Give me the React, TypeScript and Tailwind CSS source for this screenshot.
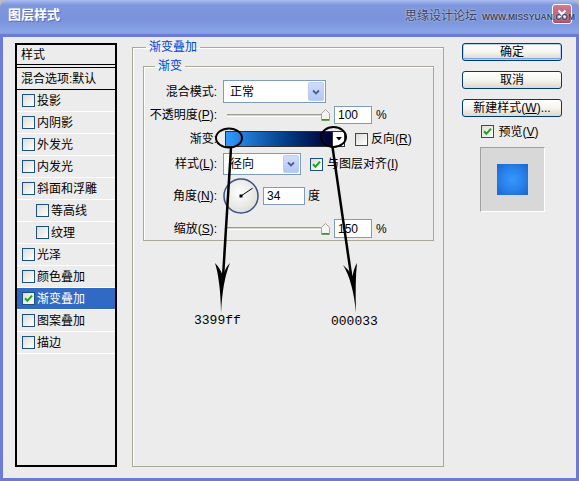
import React from 'react';

const ui = "font-['Liberation_Sans','Noto_Sans_CJK_SC',sans-serif]";

function CheckBox({ checked = false }: { checked?: boolean }) {
  return (
    <span className="w-[13px] h-[13px] border border-[#1c5180] bg-gradient-to-br from-[#dcdcd7] to-white flex items-center justify-center shrink-0">
      {checked && (
        <svg width="9" height="9" viewBox="0 0 9 9">
          <path d="M1 4.2 L3.4 6.8 L8 1.6" stroke="#21a121" strokeWidth="2" fill="none" />
        </svg>
      )}
    </span>
  );
}

function Select({ value, width, height }: { value: string; width: string; height: string }) {
  return (
    <div className={`${width} ${height} border border-[#7f9db9] bg-white flex items-center`}>
      <span className="flex-1 pl-[6px] text-[12px] leading-none">{value}</span>
      <span className="w-[16px] h-[calc(100%-2px)] mr-[1px] rounded-[2px] border border-[#bccdf6] bg-gradient-to-b from-[#cfdcfb] to-[#b3c7f7] flex items-center justify-center">
        <svg width="8" height="6" viewBox="0 0 8 6">
          <path d="M1 1.5 L4 4.5 L7 1.5" stroke="#4d6185" strokeWidth="1.8" fill="none" />
        </svg>
      </span>
    </div>
  );
}

function Slider() {
  return (
    <div className="w-[111px] h-full flex items-center px-[4px]">
      <div className="flex-1 h-[3px] border-t border-[#9d9d92] border-b border-b-white bg-[#d6d3c8]" />
      <svg width="9" height="12" viewBox="0 0 9 12" className="shrink-0">
        <path d="M0.5 11.5 V4.5 L4.5 0.5 L8.5 4.5 V11.5 Z" fill="#f4f4f0" stroke="#a5a59a" />
        <path d="M1 10 H8 V11.5 H1 Z" fill="#21a121" />
      </svg>
    </div>
  );
}

function Field({ value, width, height }: { value: string; width: string; height: string }) {
  return (
    <div className={`${width} ${height} border border-[#7f9db9] bg-white flex items-center pl-[3px] text-[12px] leading-none`}>
      {value}
    </div>
  );
}

function Button({ label, primary = false }: { label: React.ReactNode; primary?: boolean }) {
  return (
    <div
      className={`w-[100px] h-[18px] rounded-[3px] border border-[#003c74] bg-gradient-to-b from-white via-[#f5f4ef] to-[#dcd8cc] flex items-center justify-center text-[12px] leading-none text-black ${
        primary ? 'shadow-[inset_0_0_0_1px_#b9d0f5,inset_0_-1px_0_1px_#7aa2e5]' : ''
      }`}
    >
      {label}
    </div>
  );
}

const items: { label: string; sub?: boolean; checked?: boolean; selected?: boolean }[] = [
  { label: '投影' },
  { label: '内阴影' },
  { label: '外发光' },
  { label: '内发光' },
  { label: '斜面和浮雕' },
  { label: '等高线', sub: true },
  { label: '纹理', sub: true },
  { label: '光泽' },
  { label: '颜色叠加' },
  { label: '渐变叠加', checked: true, selected: true },
  { label: '图案叠加' },
  { label: '描边' },
];

function Row({ label, children, className = '' }: { label: React.ReactNode; children: React.ReactNode; className?: string }) {
  return (
    <div className={`flex items-center ${className}`}>
      <span className="w-[73px] text-right text-[12px] leading-none whitespace-nowrap">{label}</span>
      <div className="ml-[6px] h-full flex items-center">{children}</div>
    </div>
  );
}

export default function App() {
  return (
    <div className={`relative w-[579px] h-[481px] bg-[#bdbdbd] flex flex-col text-black ${ui}`}>
      {/* title bar */}
      <div className="h-[37px] shrink-0 rounded-t-[7px] bg-[linear-gradient(180deg,#aabcf0_0%,#7e96dd_14%,#7a93db_55%,#89a4e7_85%,#7b93dc_100%)] flex items-start pl-[8px] pt-[6px]">
        <span className="text-[13px] font-bold text-white leading-[17px] [text-shadow:1px_1px_0_#5b6db4]">图层样式</span>
        <div className="ml-auto mr-[7px] mt-[-2px] w-[20px] h-[20px] rounded-[3px] border border-white bg-gradient-to-b from-[#d07c93] to-[#a94b67] flex items-center justify-center">
          <svg width="10" height="10" viewBox="0 0 10 10">
            <path d="M1.5 1.5 L8.5 8.5 M8.5 1.5 L1.5 8.5" stroke="white" strokeWidth="2" />
          </svg>
        </div>
      </div>

      {/* watermark */}
      <div className="absolute left-[405px] top-[7px] flex items-center gap-[5px] whitespace-nowrap pointer-events-none">
        <span className="text-[12px] leading-[17px] text-[#3a4462] [text-shadow:0_0_2px_#e8eeff]">思缘设计论坛</span>
        <span className="text-[8.5px] font-bold leading-[17px] text-[#3a4462] mt-[2px] [text-shadow:0_0_2px_#e8eeff]">WWW.MISSYUAN.COM</span>
      </div>

      {/* body */}
      <div className="flex-1 mx-[3px] mb-[3px] bg-[#ececec] flex items-start pl-[12px] outline-[3px] outline-[#6e7bd6] outline">
        {/* styles list */}
        <div className="mt-[6px] w-[102px] h-[424px] border-2 border-black bg-[#ececec] flex flex-col">
          <div className="h-[20px] border-b border-black flex items-center pl-[4px] text-[12px] leading-none">样式</div>
          <div className="mt-[2px] h-[23px] border-y border-black flex items-center pl-[4px] text-[12px] leading-none whitespace-nowrap">混合选项:默认</div>
          {items.map((it) => (
            <div
              key={it.label}
              className={`h-[22px] border-b border-white flex items-center gap-[2px] text-[12px] leading-none ${it.sub ? 'pl-[19px]' : 'pl-[5px]'} ${
                it.selected ? 'bg-[#316ac5] text-white' : ''
              }`}
            >
              <CheckBox checked={it.checked} />
              <span>{it.label}</span>
            </div>
          ))}
        </div>

        {/* gradient overlay settings */}
        <fieldset className="ml-[15px] mt-[3px] w-[312px] h-[427px] border border-[#aca899] shadow-[inset_1px_1px_0_#fff]">
          <legend className="ml-[13px] px-[3px] text-[12px] leading-[14px] text-[#0046d5]">渐变叠加</legend>
          <fieldset className="ml-[10px] mt-[5px] w-[291px] h-[182px] border border-[#aca899] shadow-[inset_1px_1px_0_#fff]">
            <legend className="ml-[11px] px-[3px] text-[12px] leading-[14px] text-[#0046d5]">渐变</legend>
            <Row label="混合模式:" className="mt-[7px] h-[23px]">
              <Select value="正常" width="w-[103px]" height="h-[23px]" />
            </Row>
            <Row
              label={
                <>
                  不透明度(<span className="underline">P</span>):
                </>
              }
              className="mt-[3px] h-[18px]"
            >
              <Slider />
              <Field value="100" width="w-[38px]" height="h-[18px]" />
              <span className="ml-[4px] text-[12px] leading-none">%</span>
            </Row>
            <Row label="渐变:" className="mt-[7px] h-[16px]">
              <div className="ml-[2px] w-[108px] h-[16px] border border-[#303030] bg-gradient-to-r from-[#3399ff] to-[#000033]" />
              <div className="w-[12px] h-[16px] border border-[#303030] border-l-0 bg-white flex items-center justify-center">
                <svg width="6" height="4" viewBox="0 0 6 4">
                  <path d="M0 0 H6 L3 3.5 Z" fill="#000" />
                </svg>
              </div>
              <span className="ml-[10px]">
                <CheckBox />
              </span>
              <span className="ml-[3px] text-[12px] leading-none whitespace-nowrap">
                反向(<span className="underline">R</span>)
              </span>
            </Row>
            <Row
              label={
                <>
                  样式(<span className="underline">L</span>):
                </>
              }
              className="mt-[6px] h-[22px]"
            >
              <Select value="径向" width="w-[78px]" height="h-[22px]" />
              <span className="ml-[9px]">
                <CheckBox checked />
              </span>
              <span className="ml-[4px] text-[12px] leading-none whitespace-nowrap">
                与图层对齐(<span className="underline">I</span>)
              </span>
            </Row>
            <Row
              label={
                <>
                  角度(<span className="underline">N</span>):
                </>
              }
              className="mt-[3px] h-[36px]"
            >
              <svg width="36" height="36" viewBox="0 0 36 36">
                <defs>
                  <radialGradient id="dial" cx="45%" cy="40%" r="65%">
                    <stop offset="0%" stopColor="#ffffff" />
                    <stop offset="100%" stopColor="#dcdcd8" />
                  </radialGradient>
                </defs>
                <circle cx="18" cy="18" r="17" fill="url(#dial)" stroke="#3b5283" strokeWidth="1.5" />
                <line x1="18" y1="18" x2="29.6" y2="10.2" stroke="#000" strokeWidth="1" />
                <rect x="16.5" y="16.5" width="3" height="3" fill="#000" />
              </svg>
              <span className="ml-[4px]">
                <Field value="34" width="w-[42px]" height="h-[18px]" />
              </span>
              <span className="ml-[3px] text-[12px] leading-none">度</span>
            </Row>
            <Row
              label={
                <>
                  缩放(<span className="underline">S</span>):
                </>
              }
              className="mt-[5px] h-[19px]"
            >
              <Slider />
              <Field value="150" width="w-[38px]" height="h-[19px]" />
              <span className="ml-[4px] text-[12px] leading-none">%</span>
            </Row>
          </fieldset>
        </fieldset>

        {/* buttons */}
        <div className="ml-[18px] mt-[6px] w-[100px] flex flex-col items-center">
          <Button label="确定" primary />
          <div className="mt-[10px]">
            <Button label="取消" />
          </div>
          <div className="mt-[10px]">
            <Button
              label={
                <span className="whitespace-nowrap">
                  新建样式(<span className="underline">W</span>)...
                </span>
              }
            />
          </div>
          <div className="mt-[8px] flex items-center gap-[4px] pr-[4px]">
            <CheckBox checked />
            <span className="text-[12px] leading-none">
              预览(<span className="underline">V</span>)
            </span>
          </div>
          <div className="mt-[9px] w-[65px] h-[65px] border border-[#a0a0a0] border-r-white border-b-white bg-[#d8d8d8] flex items-center justify-center">
            <div className="w-[31px] h-[31px] bg-[radial-gradient(circle,#3399ff_0%,#2a84ec_45%,#1d64cf_100%)]" />
          </div>
        </div>
      </div>

      {/* annotations drawn over the screenshot */}
      <svg className="absolute inset-0 pointer-events-none" width="579" height="481" viewBox="0 0 579 481">
        <ellipse cx="229" cy="138" rx="13" ry="9.5" fill="none" stroke="#000" strokeWidth="2" />
        <ellipse cx="333.5" cy="137" rx="12.5" ry="10" fill="none" stroke="#000" strokeWidth="2" />
        <line x1="231" y1="147.5" x2="222.5" y2="285" stroke="#000" strokeWidth="2.5" />
        <path d="M215 263 Q220.5 281 221 313 Q222.5 281 230 263 Q225 268 223 276 Q220 268 215 263 Z" fill="#000" />
        <line x1="332.5" y1="147" x2="352.5" y2="285" stroke="#000" strokeWidth="2.5" />
        <path d="M343 265 Q353 281 356 313 Q355 281 357 263 Q354 268 352.5 276 Q348 269 343 265 Z" fill="#000" />
      </svg>
      <span className="absolute left-[194px] top-[313px] font-['Liberation_Mono',monospace] text-[13px] leading-[16px]">3399ff</span>
      <span className="absolute left-[331px] top-[314px] font-['Liberation_Mono',monospace] text-[13px] leading-[16px]">000033</span>
    </div>
  );
}
